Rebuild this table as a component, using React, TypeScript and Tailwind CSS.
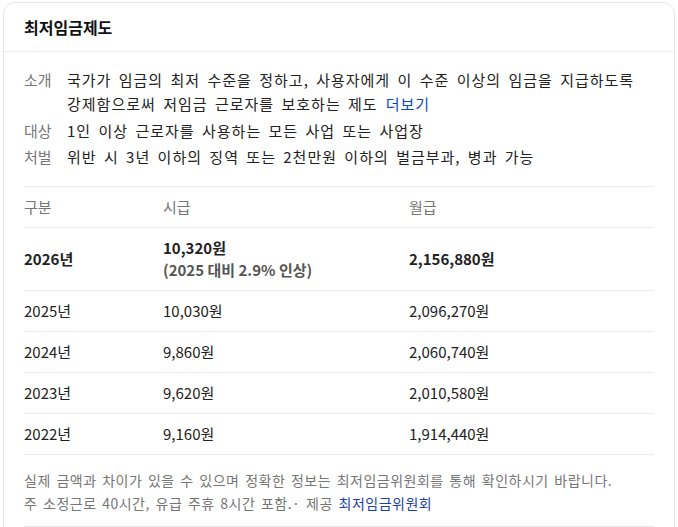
const info = [
  {
    label: '소개',
    text: '국가가 임금의 최저 수준을 정하고, 사용자에게 이 수준 이상의 임금을 지급하도록 강제함으로써 저임금 근로자를 보호하는 제도',
    more: true,
  },
  { label: '대상', text: '1인 이상 근로자를 사용하는 모든 사업 또는 사업장', more: false },
  { label: '처벌', text: '위반 시 3년 이하의 징역 또는 2천만원 이하의 벌금부과, 병과 가능', more: false },
]

const rows = [
  { year: '2025년', hourly: '10,030원', monthly: '2,096,270원' },
  { year: '2024년', hourly: '9,860원', monthly: '2,060,740원' },
  { year: '2023년', hourly: '9,620원', monthly: '2,010,580원' },
  { year: '2022년', hourly: '9,160원', monthly: '1,914,440원' },
]

export default function App() {
  return (
    <div className="bg-white min-h-screen pt-[2px] px-[3px] font-['Noto_Sans_CJK_KR','Noto_Sans',sans-serif] text-[#222]">
      <div className="border border-[#e3e5e8] rounded-xl overflow-hidden">
        <div className="h-[49px] flex items-center px-5 border-b border-[#ebedf0]">
          <h1 className="text-base font-bold text-[#111]">최저임금제도</h1>
        </div>

        <div className="px-5 pt-4">
          <div className="flex flex-col gap-[2.5px]">
            {info.map((item) => (
              <div key={item.label} className="flex text-[15px] leading-6">
                <span className="w-[43px] shrink-0 text-[#767676]">{item.label}</span>
                <p className="text-[#222] tracking-[1px] [word-spacing:3px]">
                  {item.text}
                  {item.more && <span className="ml-2 text-[#0b46c4]">더보기</span>}
                </p>
              </div>
            ))}
          </div>

          <div className="mt-[17px] border-t border-[#e9e9e9] text-[15px]">
            <div className="grid grid-cols-[139px_246px_1fr] h-[41px] items-center border-b border-[#e9e9e9] text-[#767676]">
              <span>구분</span>
              <span>시급</span>
              <span>월급</span>
            </div>
            <div className="grid grid-cols-[139px_246px_1fr] h-[63px] items-center border-b border-[#e9e9e9] font-bold">
              <span>2026년</span>
              <div className="leading-[22px]">
                <div>10,320원</div>
                <div className="text-[#555]">(2025 대비 2.9% 인상)</div>
              </div>
              <span>2,156,880원</span>
            </div>
            {rows.map((r) => (
              <div
                key={r.year}
                className="grid grid-cols-[139px_246px_1fr] h-[41px] items-center border-b border-[#e9e9e9]"
              >
                <span>{r.year}</span>
                <span>{r.hourly}</span>
                <span>{r.monthly}</span>
              </div>
            ))}
          </div>

          <div className="pt-[14px] pb-[11px] border-b border-[#e9e9e9] text-sm leading-[23px] text-[#767676] tracking-[0.5px] [word-spacing:2px]">
            <p>실제 금액과 차이가 있을 수 있으며 정확한 정보는 최저임금위원회를 통해 확인하시기 바랍니다.</p>
            <p>
              주 소정근로 40시간, 유급 주휴 8시간 포함.· 제공{' '}
              <span className="text-[#1b3ea8]">최저임금위원회</span>
            </p>
          </div>
          <div className="h-10" />
        </div>
      </div>
    </div>
  )
}
